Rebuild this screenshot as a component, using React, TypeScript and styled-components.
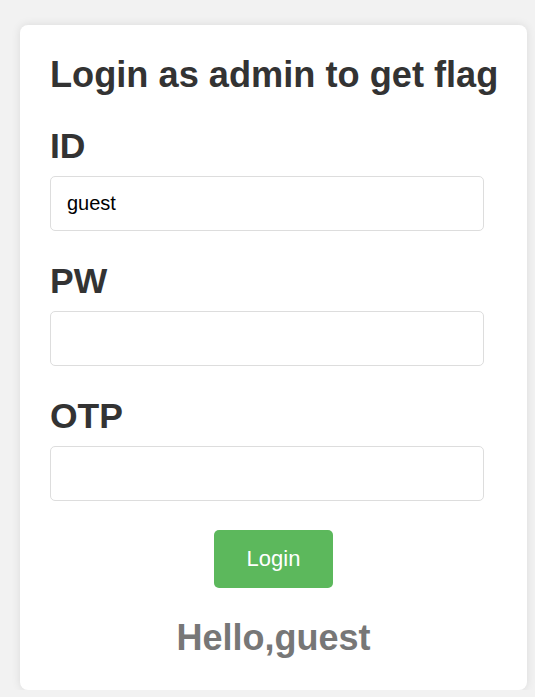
import React from "react";
import styled, { createGlobalStyle } from "styled-components";

const GlobalStyle = createGlobalStyle`
  html, body {
    margin: 0;
    padding: 0;
    background: #f2f2f2;
    font-family: "Liberation Sans", Arial, sans-serif;
  }
  * { box-sizing: border-box; }
`;

const Page = styled.div`
  padding: 25px 8px 0 20px;
`;

const Card = styled.form`
  background: #ffffff;
  border-radius: 8px;
  box-shadow: 0 0 10px rgba(0, 0, 0, 0.1);
  padding: 30px 30px 32px 30px;
  display: flex;
  flex-direction: column;
`;

const Title = styled.h2`
  margin: 0 0 31px 0;
  font-size: 36.2px;
  line-height: 40px;
  font-weight: bold;
  color: #333333;
  white-space: nowrap;
`;

const Label = styled.label`
  display: block;
  margin: 0 0 10px 0;
  font-size: 35.5px;
  line-height: 40px;
  font-weight: bold;
  color: #333333;
`;

const Field = styled.div`
  display: flex;
  flex-direction: column;
  margin-bottom: 30px;
`;

const Input = styled.input`
  width: 434px;
  height: 55px;
  border: 1px solid #dddddd;
  border-radius: 5px;
  padding: 0 16px;
  font-family: "Liberation Sans", Arial, sans-serif;
  font-size: 20px;
  color: #000000;
  background: #ffffff;
  outline: none;
`;

const Actions = styled.div`
  display: flex;
  justify-content: center;
  margin-top: -1px;
`;

const Button = styled.button`
  width: 119px;
  height: 58px;
  background: #5cb85c;
  color: #ffffff;
  border: none;
  border-radius: 5px;
  font-family: "Liberation Sans", Arial, sans-serif;
  font-size: 22px;
  cursor: pointer;
`;

const Greeting = styled.h3`
  margin: 30px 0 0 0;
  text-align: center;
  font-size: 36px;
  line-height: 40px;
  font-weight: bold;
  color: #777777;
`;

export default function App() {
  return (
    <>
      <GlobalStyle />
      <Page>
        <Card onSubmit={(e) => e.preventDefault()}>
          <Title>Login as admin to get flag</Title>
          <Field>
            <Label htmlFor="id">ID</Label>
            <Input id="id" type="text" defaultValue="guest" />
          </Field>
          <Field>
            <Label htmlFor="pw">PW</Label>
            <Input id="pw" type="password" />
          </Field>
          <Field>
            <Label htmlFor="otp">OTP</Label>
            <Input id="otp" type="text" />
          </Field>
          <Actions>
            <Button type="submit">Login</Button>
          </Actions>
          <Greeting>Hello,guest</Greeting>
        </Card>
      </Page>
    </>
  );
}
